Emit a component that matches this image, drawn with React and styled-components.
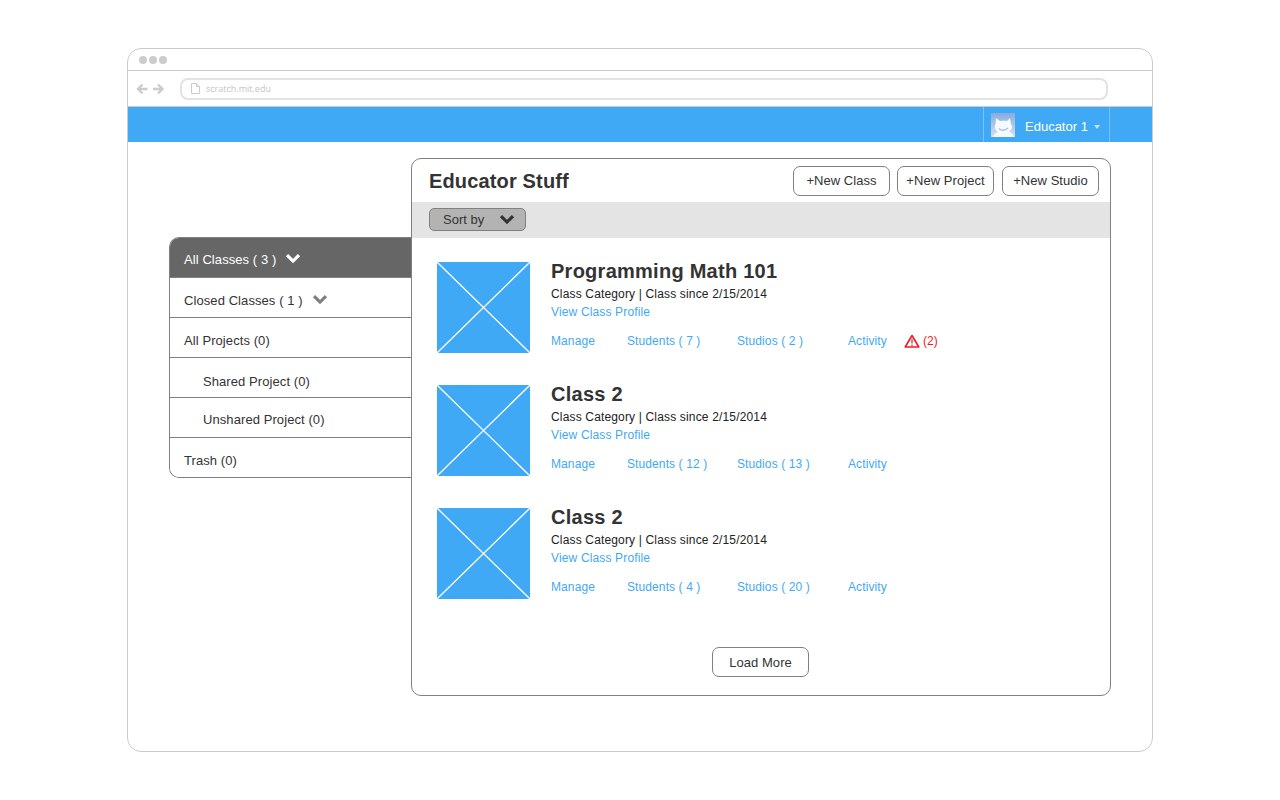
import React from 'react';
import styled, { createGlobalStyle } from 'styled-components';

const classes = [
  { id: 1, name: 'Programming Math 101', students: 7, studios: 2, alerts: 2 },
  { id: 2, name: 'Class 2', students: 12, studios: 13 },
  { id: 3, name: 'Class 2', students: 4, studios: 20 },
];

const sideItems = [
  { id: 'all', label: 'All Classes ( 3 )', active: true, chevron: true },
  { id: 'closed', label: 'Closed Classes ( 1 )', chevron: true },
  { id: 'projects', label: 'All Projects (0)' },
  { id: 'shared', label: 'Shared Project (0)', nested: true },
  { id: 'unshared', label: 'Unshared Project (0)', nested: true },
  { id: 'trash', label: 'Trash (0)' },
];

const Chevron = ({ color, width = 16 }) => (
  <svg width={width} height={width * 0.7} viewBox="0 0 16 11">
    <path d="M2 2 L8 8 L14 2" fill="none" stroke={color} strokeWidth="3.2" />
  </svg>
);

const App = () => {
  return (
    <>
      <GlobalStyle />
      <BrowserWindow>
        <TitleBar>
          <Dot />
          <Dot />
          <Dot />
        </TitleBar>
        <AddressRow>
          <svg width="34" height="12" viewBox="0 0 34 12">
            <path d="M11.500 6 H2 M6.500 1.500 L2 6 L6.500 10.500" fill="none" stroke="#ccc" strokeWidth="2.400" />
            <path d="M17 6 H26.500 M22 1.500 L26.500 6 L22 10.500" fill="none" stroke="#ccc" strokeWidth="2.400" />
          </svg>
          <AddressBar>
            <svg width="9" height="11" viewBox="0 0 9 11">
              <path d="M.5 .5 H5.500 L8.500 3.500 V10.500 H.5 Z M5.500 .5 V3.500 H8.500" fill="none" stroke="#ccc" />
            </svg>
            scratch.mit.edu
          </AddressBar>
        </AddressRow>
        <TopBar>
          <UserMenu>
            <Avatar>
              <svg width="24" height="24" viewBox="0 0 24 24">
                <defs>
                  <linearGradient id="avatarBg" x1="0" y1="0" x2="0" y2="1">
                    <stop offset="0" stopColor="#86acdd" />
                    <stop offset="1" stopColor="#d4e2f4" />
                  </linearGradient>
                  <filter id="avatarBlur">
                    <feGaussianBlur stdDeviation="0.5" />
                  </filter>
                </defs>
                <rect width="24" height="24" fill="url(#avatarBg)" />
                <g filter="url(#avatarBlur)">
                  <path d="M5 5 L9 8 C11 7.500 14 7.500 16 8 L19 5 L20 11 C22 14 21 17 18 18 C20 20 22 21 23 24 H2 C3 21 5 20 7 19 C4 17 3 14 4.500 11 Z" fill="#f6f9fd" />
                  <path d="M8 15.500 C10 18 14 18 17 15" fill="none" stroke="#a9c4e8" strokeWidth="1.500" />
                </g>
              </svg>
            </Avatar>
            Educator 1
            <Caret />
          </UserMenu>
        </TopBar>
        <Content>
          <Sidebar>
            {sideItems.map((item) => (
              <SideRow key={item.id} $active={item.active} $nested={item.nested}>
                {item.label}
                {item.chevron && <Chevron color={item.active ? '#fff' : '#808080'} />}
              </SideRow>
            ))}
          </Sidebar>
          <Panel>
            <PanelHeader>
              <PanelTitle>Educator Stuff</PanelTitle>
              <Actions>
                <OutlineButton>+New Class</OutlineButton>
                <OutlineButton>+New Project</OutlineButton>
                <OutlineButton>+New Studio</OutlineButton>
              </Actions>
            </PanelHeader>
            <SortBar>
              <SortButton>
                Sort by
                <Chevron color="#333" />
              </SortButton>
            </SortBar>
            <ClassList>
              {classes.map((c) => (
                <ClassRow key={c.id}>
                  <Thumb>
                    <svg width="93" height="91" viewBox="0 0 93 91">
                      <path d="M0 0 L93 91 M93 0 L0 91" stroke="#fff" strokeWidth="1.300" />
                    </svg>
                  </Thumb>
                  <ClassInfo>
                    <ClassName>{c.name}</ClassName>
                    <ClassMeta>Class Category | Class since 2/15/2014</ClassMeta>
                    <ProfileLink>View Class Profile</ProfileLink>
                    <LinkRow>
                      <span>Manage</span>
                      <span>Students ( {c.students} )</span>
                      <span>Studios ( {c.studios} )</span>
                      <span>Activity</span>
                      {c.alerts && (
                        <Alert>
                          <svg width="16" height="14" viewBox="0 0 16 14">
                            <path d="M8 1.500 L14.800 13 H1.200 Z" fill="none" stroke="#ed1c24" strokeWidth="1.600" strokeLinejoin="round" />
                            <path d="M8 5 V9.500 M8 10.500 V12" stroke="#ed1c24" strokeWidth="1.200" />
                          </svg>
                          ({c.alerts})
                        </Alert>
                      )}
                    </LinkRow>
                  </ClassInfo>
                </ClassRow>
              ))}
            </ClassList>
            <LoadRow>
              <OutlineButton>Load More</OutlineButton>
            </LoadRow>
          </Panel>
        </Content>
      </BrowserWindow>
    </>
  );
};

const GlobalStyle = createGlobalStyle`
  * { box-sizing: border-box; }
  body {
    margin: 0;
    background: #fff;
    font-family: "Liberation Sans", Arial, sans-serif;
    color: #333;
  }
`;

const BrowserWindow = styled.div`
  width: 1026px;
  height: 704px;
  margin: 48px auto 0;
  border: 1px solid #ccc;
  border-radius: 14px;
  overflow: hidden;
`;

const TitleBar = styled.div`
  height: 22px;
  padding-left: 11px;
  display: flex;
  align-items: center;
  gap: 2px;
  border-bottom: 1px solid #ccc;
`;

const Dot = styled.span`
  width: 8px;
  height: 8px;
  border-radius: 50%;
  background: #ccc;
`;

const AddressRow = styled.div`
  height: 36px;
  padding: 0 44px 0 8px;
  display: flex;
  align-items: center;
  gap: 10px;
  border-bottom: 1px solid #ccc;
`;

const AddressBar = styled.div`
  flex: 1;
  height: 22px;
  padding-left: 9px;
  display: flex;
  align-items: center;
  gap: 6px;
  border: 2px solid #e2e2e2;
  border-radius: 8px;
  font-family: "Open Sans", sans-serif;
  font-size: 9px;
  color: #c4c4c4;
`;

const TopBar = styled.div`
  height: 35px;
  padding-right: 42px;
  display: flex;
  justify-content: flex-end;
  background: #3fa9f5;
`;

const UserMenu = styled.div`
  width: 127px;
  padding: 3px 0 0 7px;
  display: flex;
  align-items: center;
  border-left: 1px solid #79c3f8;
  border-right: 1px solid #79c3f8;
  font-size: 13px;
  line-height: 19px;
  color: #fff;
`;

const Avatar = styled.span`
  width: 24px;
  height: 24px;
  margin: -2px 10px 0 0;
  display: flex;
`;

const Caret = styled.span`
  margin-left: 6px;
  margin-top: 1px;
  border-left: 3.5px solid transparent;
  border-right: 3.5px solid transparent;
  border-top: 4px solid #c6e5fb;
`;

const Content = styled.div`
  padding: 16px 0 0 41px;
  display: flex;
  align-items: flex-start;
`;

const Sidebar = styled.div`
  width: 242px;
  margin-top: 79px;
  border: 1px solid #808080;
  border-right: 0;
  border-radius: 10px 0 0 10px;
  overflow: hidden;
  font-size: 13px;
  letter-spacing: 0.08px;
`;

const SideRow = styled.div`
  height: 40px;
  padding: 5px 0 0 ${(p) => (p.$nested ? '33px' : '14px')};
  display: flex;
  align-items: center;
  gap: 9px;
  background: ${(p) => (p.$active ? '#666' : '#fff')};
  color: ${(p) => (p.$active ? '#fff' : '#333')};
  border-bottom: 1px solid #808080;
  &:first-child { padding-top: 3px; }
  &:nth-child(4) { padding-top: 7px; }
  &:nth-child(5) { padding-top: 3px; }
  &:last-child { border-bottom: 0; height: 39px; }
`;

const Panel = styled.div`
  width: 700px;
  height: 538px;
  border: 1px solid #808080;
  border-radius: 10px;
  overflow: hidden;
  display: flex;
  flex-direction: column;
  background: #fff;
`;

const PanelHeader = styled.div`
  height: 43px;
  padding: 0 11px 0 17px;
  display: flex;
  align-items: center;
  justify-content: space-between;
`;

const PanelTitle = styled.h1`
  margin: 2px 0 0;
  font-size: 20px;
  font-weight: 700;
  letter-spacing: 0.15px;
  color: #333;
`;

const Actions = styled.div`
  display: flex;
  gap: 7px;
  & > :last-child { margin-left: 1px; }
`;

const OutlineButton = styled.button`
  width: 97px;
  height: 30px;
  padding: 0;
  border: 1px solid #808080;
  border-radius: 7px;
  background: #fff;
  font-family: inherit;
  font-size: 13px;
  letter-spacing: 0.05px;
  color: #333;
`;

const SortBar = styled.div`
  height: 36px;
  padding: 6px 0 0 17px;
  background: #e4e4e4;
`;

const SortButton = styled.div`
  width: 97px;
  height: 23px;
  padding: 0 10px 0 13px;
  display: flex;
  align-items: center;
  justify-content: space-between;
  background: #b3b3b3;
  border: 1px solid #808080;
  border-radius: 5px;
  font-size: 13px;
  color: #333;
`;

const ClassList = styled.div`
  flex: 1;
  padding: 24px 0 0 25px;
  display: flex;
  flex-direction: column;
  gap: 32px;
`;

const ClassRow = styled.div`
  display: flex;
  gap: 21px;
  height: 91px;
`;

const Thumb = styled.div`
  width: 93px;
  height: 91px;
  display: flex;
  background: #3fa9f5;
`;

const ClassInfo = styled.div`
  flex: 1;
  display: flex;
  flex-direction: column;
`;

const ClassName = styled.h2`
  margin: -1px 0 1px;
  height: 24px;
  font-size: 20px;
  line-height: 20px;
  font-weight: 700;
  letter-spacing: 0.26px;
  color: #333;
`;

const ClassMeta = styled.div`
  height: 18px;
  font-size: 12px;
  line-height: 16px;
  letter-spacing: 0.16px;
  color: #222;
`;

const ProfileLink = styled.div`
  height: 20px;
  font-size: 12px;
  line-height: 16px;
  letter-spacing: 0.15px;
  color: #3fa9f5;
`;

const LinkRow = styled.div`
  margin-top: 10px;
  display: grid;
  grid-template-columns: 76px 110px 111px 56px auto;
  align-items: center;
  font-size: 12px;
  letter-spacing: 0.1px;
  color: #3fa9f5;
`;

const Alert = styled.span`
  display: flex;
  align-items: center;
  gap: 3px;
  font-size: 12px;
  letter-spacing: 0;
  color: #ed1c24;
`;

const LoadRow = styled.div`
  height: 49px;
  padding: 1px 1px 0 0;
  display: flex;
  justify-content: center;
  align-items: flex-start;
`;

export default App;
